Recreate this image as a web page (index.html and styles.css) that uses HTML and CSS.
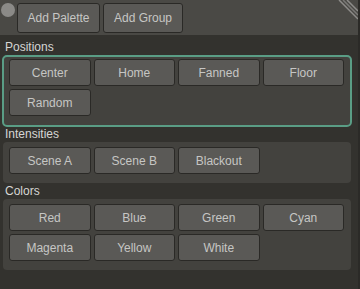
FILE: index.html
```html
<!DOCTYPE html>
<html lang="en">
<head>
    <meta charset="UTF-8">
    <meta name="viewport" content="width=device-width, initial-scale=1.0">
    <title>Palettes</title>
    <link rel="stylesheet" href="styles.css">
</head>
<body>

<div class="window">

    <!-- Toolbar -->
    <div class="toolbar">
        <span class="dot"></span>
        <button class="btn tool-btn">Add Palette</button>
        <button class="btn tool-btn">Add Group</button>
        <svg class="grip" width="20" height="20" viewBox="0 0 20 20">
            <line x1="1" y1="0" x2="20" y2="19" stroke="#8d8c89" stroke-width="1.5"/>
            <line x1="5" y1="0" x2="20" y2="15" stroke="#7a7976" stroke-width="1.5"/>
            <line x1="9" y1="0" x2="20" y2="11" stroke="#8d8c89" stroke-width="1.5"/>
        </svg>
    </div>

    <!-- Positions -->
    <div class="label label-first">Positions</div>
    <div class="group selected">
        <button class="btn">Center</button>
        <button class="btn">Home</button>
        <button class="btn">Fanned</button>
        <button class="btn">Floor</button>
        <button class="btn">Random</button>
    </div>

    <!-- Intensities -->
    <div class="label">Intensities</div>
    <div class="group">
        <button class="btn">Scene A</button>
        <button class="btn">Scene B</button>
        <button class="btn">Blackout</button>
    </div>

    <!-- Colors -->
    <div class="label">Colors</div>
    <div class="group">
        <button class="btn">Red</button>
        <button class="btn">Blue</button>
        <button class="btn">Green</button>
        <button class="btn">Cyan</button>
        <button class="btn">Magenta</button>
        <button class="btn">Yellow</button>
        <button class="btn">White</button>
    </div>

</div>

</body>
</html>
```

FILE: styles.css
```css
/* Generel styling */
body {
    margin: 0;
    padding: 0;
    background-color: #33322e;
    font-family: "Liberation Sans", Arial, sans-serif;
}

.window {
    position: relative;
    width: 360px;
    height: 289px;
    background-color: #33322e;
    overflow: hidden;
    box-sizing: border-box;
    border-right: 2px solid #2b2a27;
}

/* Toolbar */
.toolbar {
    height: 35px;
    background-color: #4a4945;
    display: flex;
    align-items: flex-start;
    padding: 3px 0 0 1px;
    box-sizing: border-box;
    gap: 3px;
}

.dot {
    width: 14px;
    height: 14px;
    border-radius: 50%;
    background-color: #8b8a87;
    margin-right: -1px;
}

.grip {
    position: absolute;
    top: 0;
    right: 0;
}

/* Knapper */
.btn {
    height: 27px;
    margin: 0;
    padding: 0;
    border: 1px solid #2a2926;
    border-radius: 3px;
    background-color: #5a5956;
    color: #c6c6c4;
    font-family: "Liberation Sans", Arial, sans-serif;
    font-size: 12px;
    box-sizing: border-box;
}

.tool-btn {
    height: 30px;
    width: 83px;
}

.tool-btn + .tool-btn {
    width: 80px;
}

/* Grupper */
.label {
    color: #d6d6d4;
    font-size: 12px;
    line-height: 15px;
    height: 15px;
    padding-left: 5px;
}

.label-first {
    margin-top: 5px;
}

.group {
    display: grid;
    grid-template-columns: repeat(4, 1fr);
    gap: 3px;
    margin: 0 7px 1px 3px;
    padding: 5px 7px 9px 6px;
    background-color: #43423e;
    border-radius: 4px;
}

.group.selected {
    margin: 0 6px 0 2px;
    padding: 2px 6px 9px 5px;
    border: 2px solid #5a9d85;
    border-radius: 5px;
}
```
